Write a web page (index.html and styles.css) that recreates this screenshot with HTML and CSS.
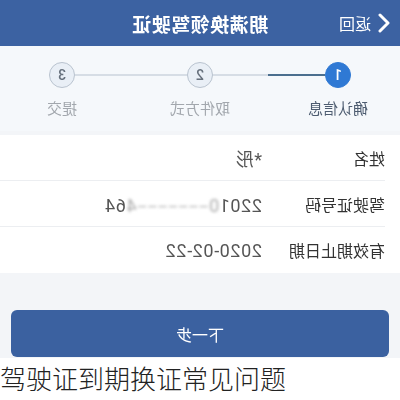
FILE: index.html
```html
<!DOCTYPE html>
<html lang="zh">
<head>
<meta charset="utf-8">
<link rel="stylesheet" href="styles.css">
</head>
<body>
<div class="app">
  <header class="topbar">
    <div class="back">
      <svg class="chev" width="14" height="20" viewBox="0 0 14 20"><path d="M11 2 L3 10 L11 18" fill="none" stroke="#fff" stroke-width="3" stroke-linecap="round" stroke-linejoin="round"/></svg>
      <span>返回</span>
    </div>
    <div class="title">期满换领驾驶证</div>
  </header>
  <section class="steps">
    <div class="dots">
      <span class="dot active">1</span>
      <span class="line first"></span>
      <span class="dot">2</span>
      <span class="line"></span>
      <span class="dot">3</span>
    </div>
    <div class="labels">
      <span class="lbl active">确认信息</span>
      <span class="lbl">取件方式</span>
      <span class="lbl">提交</span>
    </div>
  </section>
  <section class="form">
    <div class="row"><span class="key">姓名</span><span class="val">*彤</span></div>
    <div class="row"><span class="key">驾驶证号码</span><span class="val">2201<span class="blur">0‒‒‒‒‒‒‒4</span>64</span></div>
    <div class="row last"><span class="key">有效期止日期</span><span class="val">2020-02-22</span></div>
  </section>
  <div class="actions">
    <button class="next">下一步</button>
  </div>
</div>
<div class="caption">驾驶证到期换证常见问题</div>
</body>
</html>
```
FILE: styles.css
```css
html, body { margin: 0; padding: 0; }
body {
  width: 400px;
  height: 400px;
  overflow: hidden;
  background: #fff;
  font-family: "Noto Sans CJK SC", "Noto Sans", sans-serif;
}
.app {
  transform: scaleX(-1);
  background: #f3f5f8;
}
.topbar {
  height: 46px;
  background: #3c62a2;
  color: #fff;
  display: flex;
  align-items: center;
  position: relative;
}
.back {
  display: flex;
  align-items: center;
  gap: 6px;
  padding-left: 9px;
  font-size: 16px;
}
.title {
  position: absolute;
  left: 0;
  right: 0;
  text-align: center;
  font-size: 19px;
  font-weight: 700;
  letter-spacing: 0.5px;
  pointer-events: none;
}
.steps {
  background: #f5f8fb;
  padding-top: 16px;
  height: 69px;
  margin-bottom: 4px;
}
.dots {
  display: flex;
  align-items: center;
  padding-left: 49px;
}
.dot {
  width: 24px;
  height: 24px;
  border-radius: 50%;
  border: 1px solid #b9c3cf;
  background: #e9eff6;
  color: #66707c;
  font-family: "Roboto", sans-serif;
  font-size: 14px;
  font-weight: 500;
  display: flex;
  align-items: center;
  justify-content: center;
}
.dot.active {
  background: #2f79d4;
  border-color: #2f79d4;
  color: #fff;
}
.line {
  width: 112px;
  height: 2px;
  background: #d6dde5;
}
.line.first {
  background: linear-gradient(to right, #4b6f8e 0 57px, #d6dde5 57px);
}
.labels {
  display: grid;
  grid-template-columns: 124px 152px 124px;
  margin-top: 10px;
  font-size: 15px;
  line-height: 20px;
  color: #a2a7ad;
  text-align: center;
}
.lbl.active { color: #4d5c70; }
.form { background: #fff; }
.row {
  height: 45px;
  margin-left: 15px;
  border-bottom: 1px solid #eceef1;
  display: flex;
  align-items: center;
}
.row.last { border-bottom: none; height: 46px; }
.key {
  width: 123px;
  font-size: 16px;
  color: #333;
}
.val {
  font-family: "Roboto", "Noto Sans CJK SC", sans-serif;
  font-size: 18px;
  letter-spacing: 0.6px;
  color: #555;
  white-space: nowrap;
}
.blur {
  filter: blur(1.5px);
  color: #aaa;
}
.actions {
  padding: 37px 11px 1px;
}
.next {
  display: block;
  width: 100%;
  height: 47px;
  border: none;
  border-radius: 6px;
  background: #3b61a0;
  color: #fff;
  font-family: "Noto Sans CJK SC", sans-serif;
  font-size: 16px;
}
.caption {
  height: 42px;
  font-size: 26px;
  font-weight: 300;
  line-height: 40px;
  color: #222;
  white-space: nowrap;
}
```
